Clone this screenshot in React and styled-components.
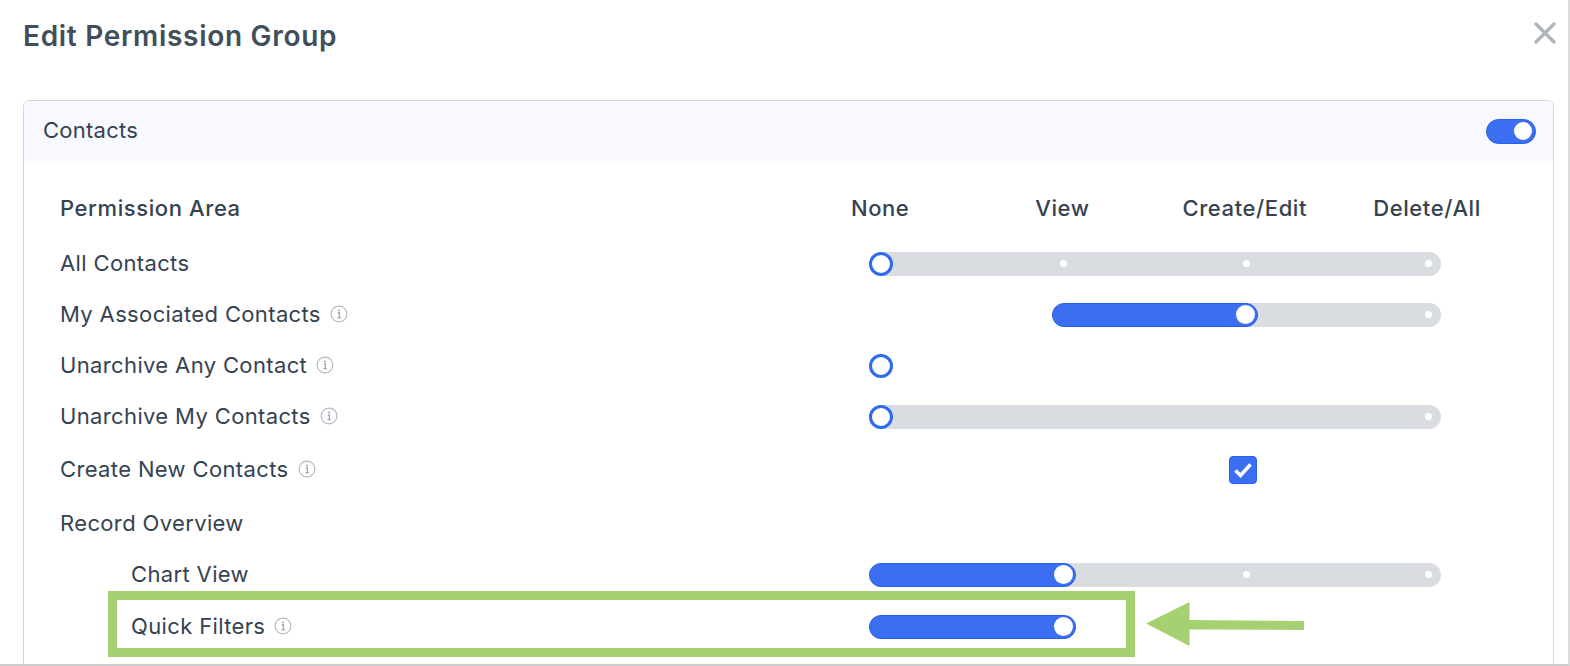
import React from "react";
import styled, { createGlobalStyle } from "styled-components";

const STOP = 182.5;

const rows = [
  { label: "All Contacts", from: 0, value: 0, to: 3, dots: [1, 2, 3] },
  { label: "My Associated Contacts", info: true, from: 1, value: 2, to: 3, dots: [3] },
  { label: "Unarchive Any Contact", info: true, from: 0, value: 0, to: 0, dots: [] },
  { label: "Unarchive My Contacts", info: true, from: 0, value: 0, to: 3, dots: [3] },
  { label: "Create New Contacts", info: true, check: true },
  { label: "Record Overview" },
  { label: "Chart View", nested: true, from: 0, value: 1, to: 3, dots: [2, 3] },
  { label: "Quick Filters", info: true, nested: true, from: 0, value: 1, to: 1, dots: [], marked: true },
];

function InfoIcon() {
  return (
    <InfoSvg viewBox="0 0 18 18" aria-hidden="true">
      <circle cx="9" cy="9" r="7.9" fill="none" stroke="#b4bbc4" strokeWidth="1.2" />
      <circle cx="9" cy="5.4" r="0.9" fill="#8e98a3" />
      <path d="M7.7 7.9H9.3V12.6M7.5 12.7H10.9" fill="none" stroke="#8e98a3" strokeWidth="1.1" />
    </InfoSvg>
  );
}

function Slider({ from, value, to, dots }) {
  const width = (to - from) * STOP + 24;
  const fill = (value - from) * STOP + 24;
  return (
    <Track $from={from} style={{ width }}>
      {dots.map((d) => (
        <Dot key={d} style={{ left: (d - from) * STOP + 8.5 }} />
      ))}
      <Fill $empty={value === from} style={{ width: fill }}>
        <Knob $empty={value === from} />
      </Fill>
    </Track>
  );
}

function App() {
  return (
    <Page>
      <GlobalStyle />
      <TitleBar>
        <Title>Edit Permission Group</Title>
        <CloseIcon viewBox="0 0 22 22" aria-label="Close">
          <path d="M2 2L20 20M20 2L2 20" stroke="#adb5bd" strokeWidth="3.4" strokeLinecap="round" />
        </CloseIcon>
      </TitleBar>
      <Card>
        <CardHeader>
          <CardName>Contacts</CardName>
          <Toggle>
            <ToggleKnob />
          </Toggle>
        </CardHeader>
        <Table>
          <HeadRow>
            <HeadCell>Permission Area</HeadCell>
            <LevelCell>None</LevelCell>
            <LevelCell>View</LevelCell>
            <LevelCell>Create/Edit</LevelCell>
            <LevelCell>Delete/All</LevelCell>
          </HeadRow>
          {rows.map((row) => (
            <Row key={row.label} $tall={row.check} $marked={row.marked}>
              <Label $nested={row.nested}>
                {row.label}
                {row.info && <InfoIcon />}
              </Label>
              <Controls>
                {row.check && (
                  <Checkbox>
                    <svg viewBox="0 0 28 28" width="28" height="28" aria-hidden="true">
                      <path d="M6.5 14.5L11.5 19.5L21.5 8.5" fill="none" stroke="#fff" strokeWidth="3.6" />
                    </svg>
                  </Checkbox>
                )}
                {row.to !== undefined && <Slider {...row} />}
              </Controls>
              {row.marked && (
                <>
                  <Highlight />
                  <Arrow viewBox="0 0 158 44" aria-hidden="true">
                    <path d="M0 21.5L43.5 0V18L158 19V28L43.5 27.5V44Z" fill="#a6d172" />
                  </Arrow>
                </>
              )}
            </Row>
          ))}
        </Table>
      </Card>
    </Page>
  );
}

export default App;

const GlobalStyle = createGlobalStyle`
  html, body {
    margin: 0;
    padding: 0;
    background: #fff;
    overflow: hidden;
  }
  * {
    box-sizing: border-box;
  }
`;

const Page = styled.div`
  width: 1570px;
  height: 666px;
  overflow: hidden;
  padding-left: 23px;
  border-right: 2px solid #dcdcdc;
  border-bottom: 2px solid #cdcdcd;
  font-family: "Inter", "Liberation Sans", sans-serif;
  color: #354252;
`;

const TitleBar = styled.div`
  height: 100px;
  padding: 22px 12px 0 0;
  display: flex;
  justify-content: space-between;
  align-items: flex-start;
`;

const Title = styled.h1`
  margin: -1px 0 0;
  font-size: 28px;
  line-height: 30px;
  font-weight: 600;
  letter-spacing: 0.7px;
  color: #414e5c;
`;

const CloseIcon = styled.svg`
  width: 22px;
  height: 22px;
`;

const Card = styled.div`
  width: 1531px;
  height: 620px;
  border: 1.5px solid #d3d9e0;
  border-radius: 6px;
  overflow: hidden;
`;

const CardHeader = styled.div`
  height: 60px;
  padding: 0 17px 0 19px;
  background: #f8f9fe;
  display: flex;
  align-items: center;
  justify-content: space-between;
`;

const CardName = styled.span`
  font-size: 22px;
  letter-spacing: 0.25px;
  margin-top: -2px;
`;

const Toggle = styled.div`
  width: 50px;
  height: 25px;
  padding: 0 3px;
  border-radius: 13px;
  background: #3b6ef0;
  border: 1px solid #2563eb;
  display: flex;
  align-items: center;
  justify-content: flex-end;
`;

const ToggleKnob = styled.div`
  width: 18px;
  height: 18px;
  border-radius: 50%;
  background: #fff;
`;

const Table = styled.div`
  padding: 21px 0 0 36px;
`;

const HeadRow = styled.div`
  height: 52px;
  margin-bottom: 4px;
  display: grid;
  grid-template-columns: 729px repeat(4, 182.3px);
  align-items: center;
  font-size: 22px;
  font-weight: 500;
  letter-spacing: 0.6px;
`;

const HeadCell = styled.div``;

const LevelCell = styled.div`
  text-align: center;
`;

const Row = styled.div`
  position: relative;
  height: ${(p) => (p.$tall ? "56px" : "51px")};
  margin-top: ${(p) => (p.$marked ? "1px" : "0")};
  display: flex;
  align-items: center;
`;

const Label = styled.div`
  width: 809px;
  padding-left: ${(p) => (p.$nested ? "71px" : "0")};
  display: flex;
  align-items: center;
  gap: 9px;
  font-size: 22px;
  letter-spacing: 0.36px;
  margin-top: -2px;
`;

const InfoSvg = styled.svg`
  width: 18px;
  height: 18px;
  flex: none;
`;

const Controls = styled.div`
  width: 572px;
  display: flex;
  align-items: center;
`;

const Track = styled.div`
  position: relative;
  height: 24px;
  margin-left: ${(p) => p.$from * STOP}px;
  border-radius: 12px;
  background: #d9dce1;
`;

const Dot = styled.span`
  position: absolute;
  top: 8.5px;
  width: 7px;
  height: 7px;
  border-radius: 50%;
  background: #fff;
`;

const Fill = styled.div`
  position: relative;
  height: 24px;
  border-radius: 12px;
  background: ${(p) => (p.$empty ? "transparent" : "#3b6ef0")};
  border: ${(p) => (p.$empty ? "0" : "1px solid #2563eb")};
  padding-right: ${(p) => (p.$empty ? "0" : "2px")};
  display: flex;
  align-items: center;
  justify-content: flex-end;
`;

const Knob = styled.div`
  width: ${(p) => (p.$empty ? "24px" : "19px")};
  height: ${(p) => (p.$empty ? "24px" : "19px")};
  border-radius: 50%;
  background: #fff;
  border: ${(p) => (p.$empty ? "3px solid #2f6bf0" : "0")};
`;

const Checkbox = styled.div`
  width: 28px;
  height: 28px;
  margin-left: 360px;
  border-radius: 4px;
  background: #3b6ef0;
  border: 1px solid #2563eb;
  display: flex;
  align-items: center;
  justify-content: center;

  > svg {
    flex: none;
  }
`;

const Highlight = styled.div`
  position: absolute;
  left: 48px;
  top: -10px;
  width: 1027px;
  height: 66px;
  border: 9px solid #a6d172;
  pointer-events: none;
`;

const Arrow = styled.svg`
  position: absolute;
  left: 1085.5px;
  top: 1px;
  width: 158px;
  height: 44px;
`;
